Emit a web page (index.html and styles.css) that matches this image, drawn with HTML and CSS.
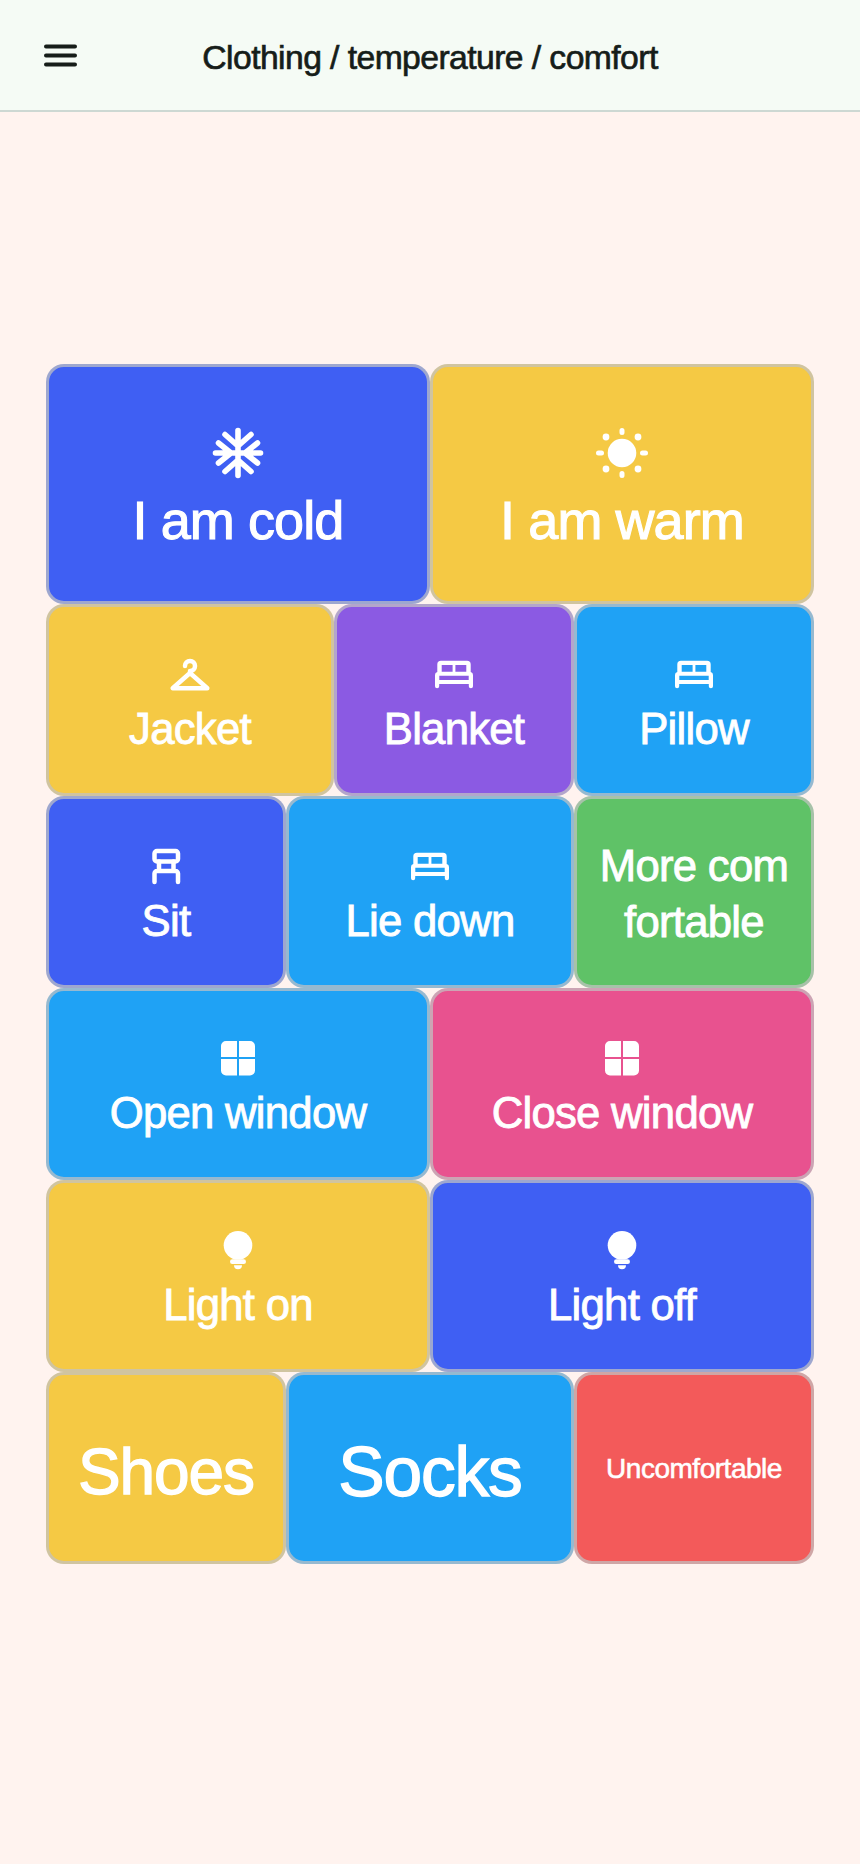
FILE: index.html
```html
<!doctype html>
<html>
<head>
	<meta charset="utf-8">
	<title>Clothing / temperature / comfort</title>
	<link rel="stylesheet" href="styles.css">
</head>
<body>
	<!-- top bar -->
	<header class="bar">
		<svg class="menu" viewBox="0 0 33 23"><path d="M2 2.500h29M2 11.500h29M2 20.500h29"/></svg>
		<h1>Clothing / temperature / comfort</h1>
	</header>

	<!-- board -->
	<main class="board">
		<div class="tile half big blue">
			<svg class="icon-big line snow" viewBox="-4 -4 56 56"><path d="M24 1.500V46.500M1.500 24H46.500M11 5.500L24 17L37 5.500M4.500 14L17 24L4.500 34M11 42.500L24 31L37 42.500M43.500 14L31 24L43.500 34"/></svg>
			<span>I am cold</span>
		</div>
		<div class="tile half big yellow">
			<svg class="icon-big" viewBox="0 0 56 56"><circle cx="28" cy="28" r="14.300"/><path class="line" d="M28 5.500V7.500M28 48.500V50.500M4.500 28H7.500M48.500 28H51.500"/><circle cx="12" cy="12" r="3.400"/><circle cx="44" cy="12" r="3.400"/><circle cx="12" cy="44" r="3.400"/><circle cx="44" cy="44" r="3.400"/></svg>
			<span>I am warm</span>
		</div>

		<div class="tile wide yellow">
			<svg class="icon line thin" viewBox="0 0 48 48"><path d="M19 16a5 5 0 1 1 5 5v2M24 23L6.700 38.300H41.300Z"/></svg>
			<span>Jacket</span>
		</div>
		<div class="tile narrow purple">
			<svg class="icon" viewBox="0 0 48 48"><use href="#bed"/></svg>
			<span>Blanket</span>
		</div>
		<div class="tile narrow sky">
			<svg class="icon" viewBox="0 0 48 48"><use href="#bed"/></svg>
			<span>Pillow</span>
		</div>

		<div class="tile narrow blue">
			<svg class="icon line thin" viewBox="0 0 48 48"><rect x="12.500" y="9" width="23.500" height="10.500" rx="2.500"/><path d="M17 19.500V29M31.500 19.500V29M12.500 40V31.500a2.500 2.500 0 0 1 2.500-2.500H33.500a2.500 2.500 0 0 1 2.500 2.500V40"/></svg>
			<span>Sit</span>
		</div>
		<div class="tile wide sky">
			<svg class="icon" viewBox="0 0 48 48"><use href="#bed"/></svg>
			<span>Lie down</span>
		</div>
		<div class="tile narrow green two-lines">
			<span>More comfortable</span>
		</div>

		<div class="tile half sky">
			<svg class="icon" viewBox="0 0 48 48"><use href="#window"/></svg>
			<span>Open window</span>
		</div>
		<div class="tile half pink">
			<svg class="icon" viewBox="0 0 48 48"><use href="#window"/></svg>
			<span>Close window</span>
		</div>

		<div class="tile half yellow">
			<svg class="icon" viewBox="0 0 48 48"><use href="#bulb"/></svg>
			<span>Light on</span>
		</div>
		<div class="tile half blue">
			<svg class="icon" viewBox="0 0 48 48"><use href="#bulb"/></svg>
			<span>Light off</span>
		</div>

		<div class="tile narrow yellow fit-shoes"><span>Shoes</span></div>
		<div class="tile wide sky fit-socks"><span>Socks</span></div>
		<div class="tile narrow red fit-small"><span>Uncomfortable</span></div>
	</main>

	<!-- shared icons -->
	<svg class="defs">
		<symbol id="bed" viewBox="0 0 48 48">
			<path fill-rule="evenodd" d="M11 10.700H37a3.700 3.700 0 0 1 3.700 3.700V22a3 3 0 0 1 2.300 3V36.200a2.100 2.100 0 0 1-4.200 0V34H9.200V36.200a2.100 2.100 0 0 1-4.200 0V25a3 3 0 0 1 2.300-3V14.400a3.700 3.700 0 0 1 3.700-3.700ZM11.700 15H22.600V21.700H11.700ZM25.400 15H36.300V21.700H25.400ZM9.300 25.700H38.700V30H9.300Z"/>
		</symbol>
		<symbol id="window" viewBox="0 0 48 48">
			<path d="M7 12a5 5 0 0 1 5-5H23V23H7ZM25 7H36a5 5 0 0 1 5 5V23H25ZM7 25H23V41.500H12a5 5 0 0 1-5-5ZM25 25H41V36.500a5 5 0 0 1-5 5H25Z"/>
		</symbol>
		<symbol id="bulb" viewBox="0 0 48 48">
			<circle cx="24" cy="19.300" r="14.300"/>
			<rect x="16" y="33.300" width="16" height="4.700" rx="2.350"/>
			<path d="M20 39.200H28a4 4 0 0 1-8 0Z"/>
		</symbol>
	</svg>
</body>
</html>
```

FILE: styles.css
```css
*{box-sizing:border-box;}
html,body{margin:0;padding:0;}
body{
	min-height:100vh;
	background-color:#fff3ef;
	font-family:"Liberation Sans",Arial,sans-serif;
}
/* top bar */
.bar{
	height:112px;
	padding-top:4px;
	background-color:#f5fbf5;
	border-bottom:2px solid #cdd8d3;
	display:flex;
	align-items:center;
	justify-content:center;
	position:relative;
}
.bar h1{
	margin:0;
	font-size:33.700px;
	font-weight:normal;
	letter-spacing:-0.017em;
	-webkit-text-stroke:0.02em #161d19;
	color:#161d19;
}
.menu{
	width:33px;
	height:23px;
	position:absolute;
	left:44px;
	top:44px;
	fill:none;
	stroke:#161d19;
	stroke-width:4;
	stroke-linecap:round;
}
/* board */
.board{
	display:grid;
	grid-template-columns:repeat(16,48px);
	grid-template-rows:240px repeat(5,192px);
	padding:252px 46px 0;
}
.tile{
	display:flex;
	flex-direction:column;
	align-items:center;
	justify-content:center;
	padding:7px 20px 0;
	border:3px solid rgba(193,193,193,0.735);
	border-radius:18px;
	color:#fff;
	font-size:43.700px;
	line-height:56px;
	letter-spacing:-0.017em;
	-webkit-text-stroke:0.02em #fff;
	text-align:center;
	word-break:break-all;
}
.tile span{padding-top:3px;}
.half{grid-column:span 8;}
.wide{grid-column:span 6;}
.narrow{grid-column:span 5;}
.big{font-size:54px;line-height:70px;padding-top:12px;}
.big span{padding-top:4px;}
.two-lines{padding-top:4px;}
.two-lines span{padding-top:0;}
.fit-shoes{font-size:64px;line-height:70px;padding-top:7px;}
.fit-socks{font-size:69.500px;line-height:76px;padding-top:7px;}
.fit-small{font-size:28px;line-height:36px;padding-top:2px;}
.fit-shoes span,.fit-socks span,.fit-small span{padding-top:0;}

.blue{background-color:#3f5ff3;}
.yellow{background-color:#f5c944;}
.purple{background-color:#8b5ae3;}
.sky{background-color:#1fa2f5;}
.green{background-color:#5fc267;}
.pink{background-color:#e8528f;}
.red{background-color:#f35a5a;}

/* icons */
.icon{width:48px;height:48px;fill:#fff;flex:none;}
.icon-big{width:56px;height:56px;fill:#fff;flex:none;}
.line,.line path,.line rect{
	fill:none;
	stroke:#fff;
	stroke-width:5;
	stroke-linecap:round;
	stroke-linejoin:round;
}
.snow path{stroke-width:5.600;}
.thin,.thin path,.thin rect{stroke-width:4.500;}
.defs{display:none;}
```
